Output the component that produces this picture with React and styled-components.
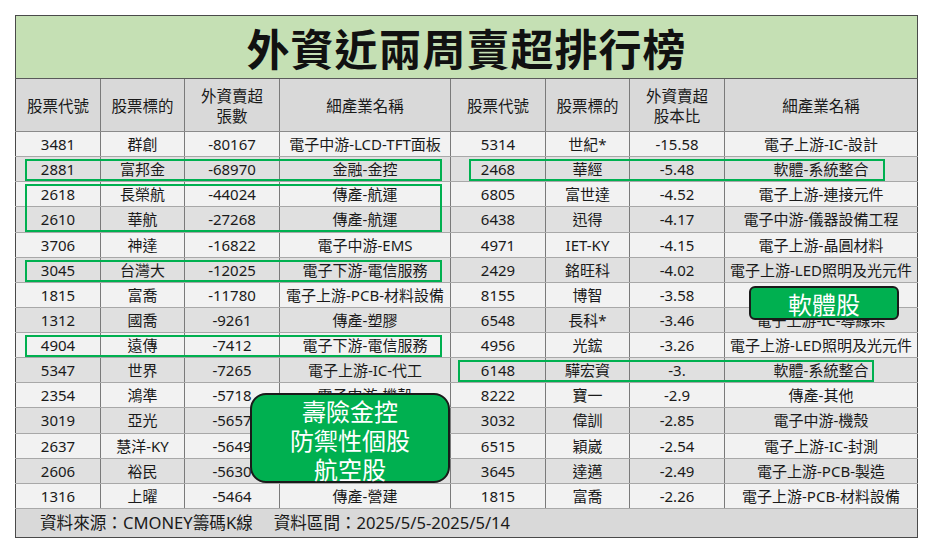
import React from "react";
import styled, { createGlobalStyle } from "styled-components";

const Global = createGlobalStyle`
  html, body { margin: 0; padding: 0; background: #ffffff; }
  body { font-family: "Noto Sans", "Noto Sans CJK TC", sans-serif; color: #1a1a1a; }
`;

const Page = styled.div`
  padding: 15px;
  width: 932px;
  height: 558px;
  box-sizing: border-box;
`;

const Sheet = styled.div`
  position: relative;
  width: 902px;
`;

const Table = styled.table`
  width: 902px;
  border-collapse: collapse;
  table-layout: fixed;
  border: 1.5px solid #4a4a4a;
`;

const TitleCell = styled.th`
  height: 62px;
  padding: 0;
  background: #c5e0b4;
  font-family: "Noto Sans CJK TC", sans-serif;
  font-size: 43px;
  line-height: 60px;
  font-weight: 700;
  letter-spacing: 1px;
  text-align: center;
  border-bottom: 1.5px solid #5a5a5a;
  color: #111;
`;

const HeadCell = styled.th`
  height: 52px;
  padding: 0;
  background: #d9d9d9;
  font-family: "Noto Sans CJK TC", sans-serif;
  font-size: 15.5px;
  font-weight: 400;
  line-height: 20px;
  text-align: center;
  border-left: ${(p) => (p.$first ? "none" : "1.5px solid #7a7a7a")};
  border-bottom: 1px solid #8a8a8a;
`;

const Row = styled.tr`
  background: ${(p) => (p.$alt ? "#e0e0e0" : "#f2f2f2")};
`;

const Cell = styled.td`
  padding: 0;
  height: 24.14px;
  font-size: 15px;
  text-align: center;
  white-space: nowrap;
  overflow: hidden;
  border-left: ${(p) => (p.$first ? "none" : "1.5px solid #7a7a7a")};
  border-bottom: 1px solid #a8a8a8;
  line-height: 22px;
`;

const FootCell = styled.td`
  height: 28px;
  padding: 0 0 0 24px;
  background: #d9d9d9;
  font-size: 16.6px;
  line-height: 26px;
  text-align: left;
  white-space: pre;
`;

const Outline = styled.div`
  position: absolute;
  border: 2px solid #00b050;
  box-sizing: border-box;
  pointer-events: none;
`;

const Callout = styled.div`
  position: absolute;
  box-sizing: border-box;
  background: #00b050;
  border: 2px solid #1a1a1a;
  border-radius: ${(p) => p.$radius}px;
  padding-top: ${(p) => p.$shift || 0}px;
  color: #ffffff;
  font-family: "Noto Sans CJK TC", sans-serif;
  font-size: 24px;
  line-height: 29px;
  font-weight: 400;
  display: flex;
  flex-direction: column;
  align-items: center;
  justify-content: center;
`;

const left = [
  ["3481", "群創", "-80167", "電子中游-LCD-TFT面板"],
  ["2881", "富邦金", "-68970", "金融-金控"],
  ["2618", "長榮航", "-44024", "傳產-航運"],
  ["2610", "華航", "-27268", "傳產-航運"],
  ["3706", "神達", "-16822", "電子中游-EMS"],
  ["3045", "台灣大", "-12025", "電子下游-電信服務"],
  ["1815", "富喬", "-11780", "電子上游-PCB-材料設備"],
  ["1312", "國喬", "-9261", "傳產-塑膠"],
  ["4904", "遠傳", "-7412", "電子下游-電信服務"],
  ["5347", "世界", "-7265", "電子上游-IC-代工"],
  ["2354", "鴻準", "-5718", "電子中游-機殼"],
  ["3019", "亞光", "-5657", "電子中游-光學鏡頭"],
  ["2637", "慧洋-KY", "-5649", "傳產-航運"],
  ["2606", "裕民", "-5630", "傳產-航運"],
  ["1316", "上曜", "-5464", "傳產-營建"],
];

const right = [
  ["5314", "世紀*", "-15.58", "電子上游-IC-設計"],
  ["2468", "華經", "-5.48", "軟體-系統整合"],
  ["6805", "富世達", "-4.52", "電子上游-連接元件"],
  ["6438", "迅得", "-4.17", "電子中游-儀器設備工程"],
  ["4971", "IET-KY", "-4.15", "電子上游-晶圓材料"],
  ["2429", "銘旺科", "-4.02", "電子上游-LED照明及光元件"],
  ["8155", "博智", "-3.58", "電子上游-PCB-製造"],
  ["6548", "長科*", "-3.46", "電子上游-IC-導線架"],
  ["4956", "光鋐", "-3.26", "電子上游-LED照明及光元件"],
  ["6148", "驊宏資", "-3.", "軟體-系統整合"],
  ["8222", "寶一", "-2.9", "傳產-其他"],
  ["3032", "偉訓", "-2.85", "電子中游-機殼"],
  ["6515", "穎崴", "-2.54", "電子上游-IC-封測"],
  ["3645", "達邁", "-2.49", "電子上游-PCB-製造"],
  ["1815", "富喬", "-2.26", "電子上游-PCB-材料設備"],
];

const widths = [85, 84, 95, 171, 95, 84, 95, 193];

const ROW_TOP = 117;
const ROW_H = 25.13;

const boxes = [
  { x: 10, row: 1, n: 1, w: 417 },
  { x: 10, row: 2, n: 2, w: 417 },
  { x: 10, row: 5, n: 1, w: 417 },
  { x: 10, row: 8, n: 1, w: 417 },
  { x: 454, row: 1, n: 1, w: 416 },
  { x: 443, row: 9, n: 1, w: 416 },
];

export default function App() {
  return (
    <Page>
      <Global />
      <Sheet>
        <Table>
          <colgroup>
            {widths.map((w, i) => (
              <col key={i} style={{ width: w }} />
            ))}
          </colgroup>
          <thead>
            <tr>
              <TitleCell colSpan={8}>外資近兩周賣超排行榜</TitleCell>
            </tr>
            <tr>
              <HeadCell $first>股票代號</HeadCell>
              <HeadCell>股票標的</HeadCell>
              <HeadCell>
                外資賣超
                <br />
                張數
              </HeadCell>
              <HeadCell>細產業名稱</HeadCell>
              <HeadCell>股票代號</HeadCell>
              <HeadCell>股票標的</HeadCell>
              <HeadCell>
                外資賣超
                <br />
                股本比
              </HeadCell>
              <HeadCell>細產業名稱</HeadCell>
            </tr>
          </thead>
          <tbody>
            {left.map((l, i) => (
              <Row key={i} $alt={i % 2 === 1}>
                <Cell $first>{l[0]}</Cell>
                <Cell>{l[1]}</Cell>
                <Cell>{l[2]}</Cell>
                <Cell>{l[3]}</Cell>
                <Cell>{right[i][0]}</Cell>
                <Cell>{right[i][1]}</Cell>
                <Cell>{right[i][2]}</Cell>
                <Cell>{right[i][3]}</Cell>
              </Row>
            ))}
            <tr>
              <FootCell colSpan={8}>
                {"資料來源：CMONEY籌碼K線　 資料區間：2025/5/5-2025/5/14"}
              </FootCell>
            </tr>
          </tbody>
        </Table>
        {boxes.map((b, i) => (
          <Outline
            key={i}
            style={{
              left: b.x,
              top: ROW_TOP + b.row * ROW_H + 2,
              width: b.w,
              height: b.n * ROW_H - 3,
            }}
          />
        ))}
        <Callout $radius={16} $shift={3} style={{ left: 235, top: 378, width: 200, height: 90 }}>
          <span>壽險金控</span>
          <span>防禦性個股</span>
          <span>航空股</span>
        </Callout>
        <Callout $radius={6} style={{ left: 734, top: 271, width: 150, height: 34 }}>
          <span>軟體股</span>
        </Callout>
      </Sheet>
    </Page>
  );
}
